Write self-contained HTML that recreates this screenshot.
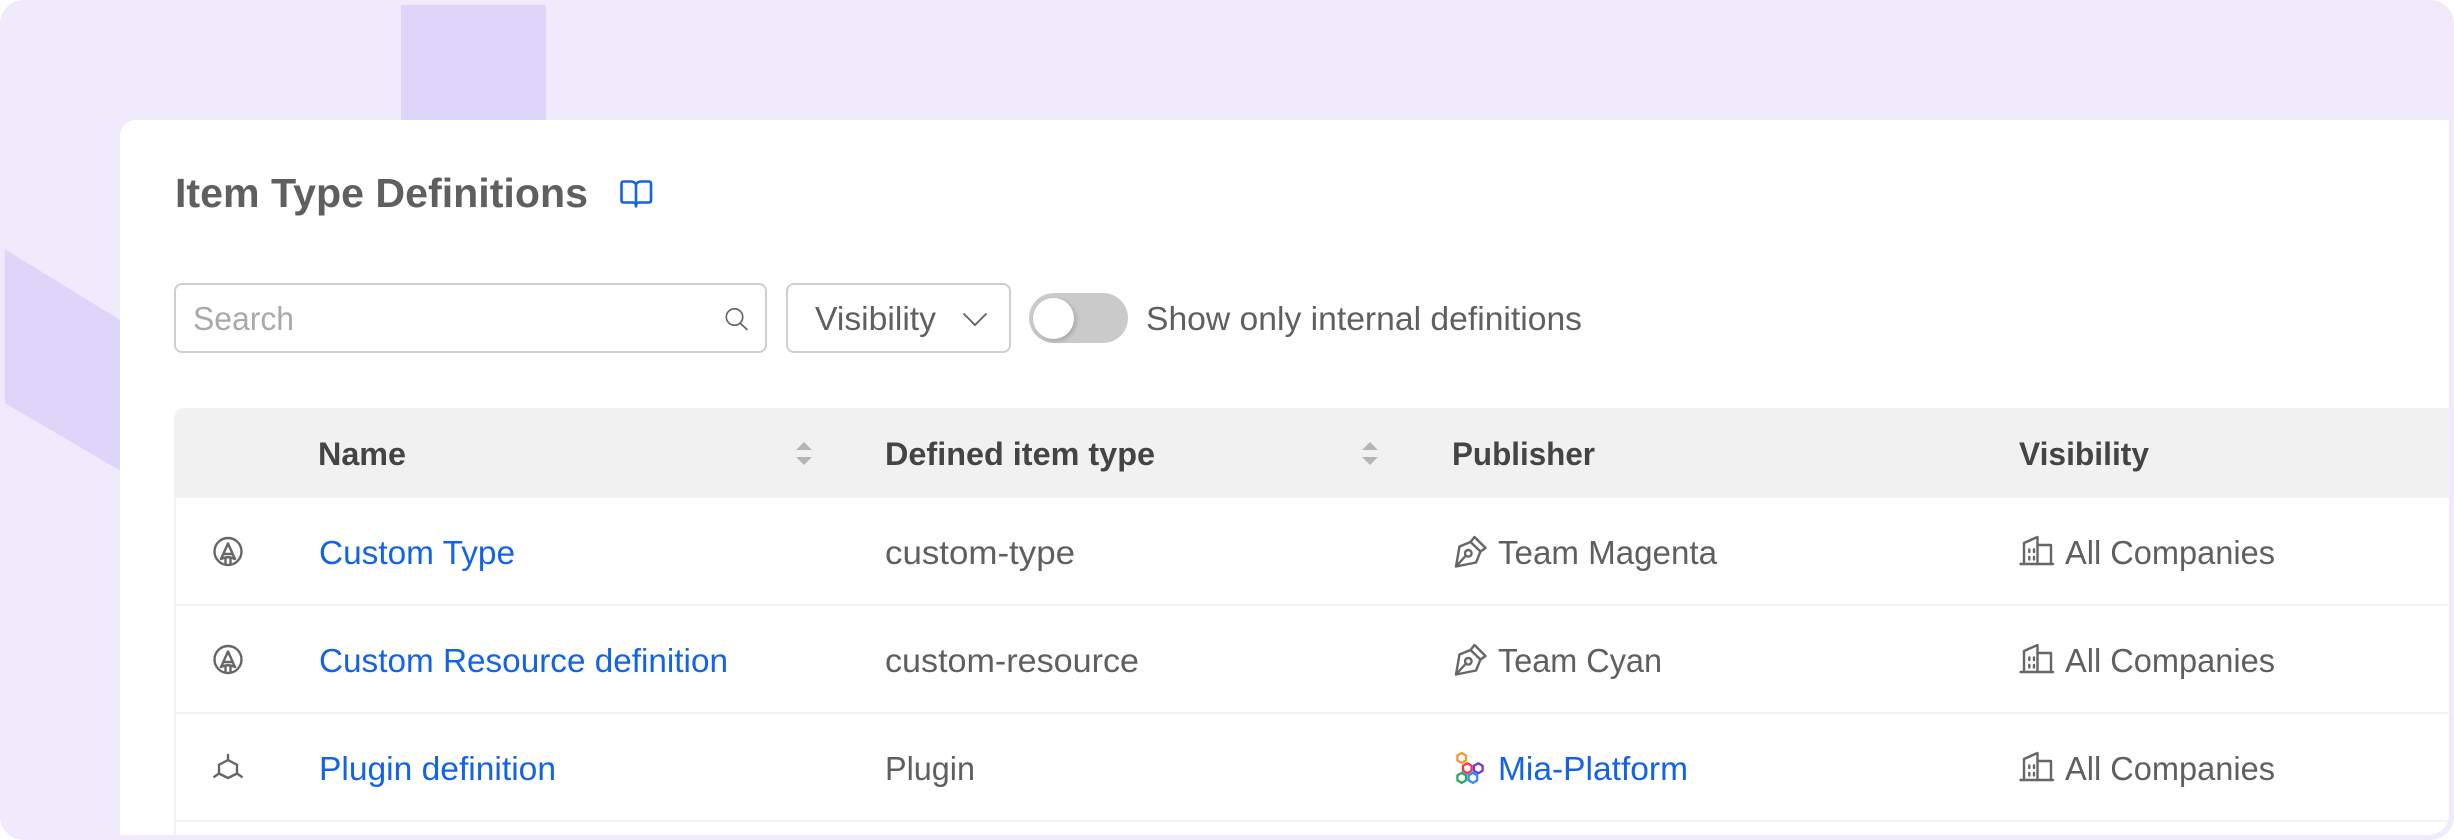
<!DOCTYPE html>
<html><head><meta charset="utf-8"><title>Item Type Definitions</title>
<style>
html,body{margin:0;padding:0;background:#fff;width:2454px;height:840px;overflow:hidden}
.abs{position:absolute;box-sizing:border-box}
svg{position:absolute;left:0;top:0}
text{font-family:"Liberation Sans",sans-serif;font-size:33px;fill:#5f5f5f}
.b{font-weight:700;fill:#444;font-size:32px}
.l{fill:#1463e6}
.i{fill:none;stroke:#666;stroke-width:2.4;stroke-linejoin:round;stroke-linecap:round}
</style></head><body>
<div class="abs" style="left:0;top:0;width:2454px;height:840px;background:#EFEAFC;border-radius:24px;overflow:hidden">
 <div class="abs" style="left:401px;top:5px;width:145px;height:115px;background:#DDD6F8"></div>
 <svg width="2454" height="840"><polygon points="4.6,249 120,320 120,470.500 4.6,403" fill="#DDD6F8"/></svg>
 <div class="abs" style="left:120px;top:120px;width:2329px;height:715px;background:#fff;border-radius:16px 0 20px 0"></div>
 <div class="abs" style="left:174px;top:283px;width:593px;height:70px;border:2px solid #cfcfcf;border-radius:8px"></div>
 <div class="abs" style="left:786px;top:283px;width:225px;height:70px;border:2px solid #cfcfcf;border-radius:8px"></div>
 <div class="abs" style="left:1029px;top:293px;width:99px;height:50px;background:#cacaca;border-radius:25px"></div>
 <div class="abs" style="left:1033px;top:298px;width:41px;height:41px;background:#fff;border-radius:50%;box-shadow:2px 2px 5px rgba(0,0,0,.18)"></div>
 <div class="abs" style="left:174px;top:408px;width:2275px;height:90px;background:#f1f1f1;border-radius:10px 0 0 0"></div>
 <div class="abs" style="left:174px;top:498px;width:2px;height:337px;background:#f3f3f3"></div>
 <div class="abs" style="left:174px;top:604px;width:2275px;height:2px;background:#f3f3f3"></div>
 <div class="abs" style="left:174px;top:712px;width:2275px;height:2px;background:#f3f3f3"></div>
 <div class="abs" style="left:174px;top:820px;width:2275px;height:2px;background:#f3f3f3"></div>
 <svg width="2454" height="840" viewBox="0 0 2454 840">
  <text x="175" y="207" textLength="413" lengthAdjust="spacingAndGlyphs" style="font-size:41px;font-weight:700;fill:#5f5f5f">Item Type Definitions</text>
  <g fill="none" stroke="#1463e6" stroke-width="2.6" stroke-linejoin="round">
   <path d="M636 184.500Q634.500 181.500 631 181.500H623.500Q621.500 181.500 621.500 183.500V200.500Q621.500 202.500 623.500 202.500H633Q635.500 202.500 636 205Q636.500 202.500 639 202.500H649Q651 202.500 651 200.500V183.500Q651 181.500 649 181.500H641Q637.500 181.500 636 184.500Z"/>
   <path d="M636 184.500V207.500"/>
  </g>
  <text x="193" y="330" textLength="101" lengthAdjust="spacingAndGlyphs" style="fill:#aaa">Search</text>
  <g fill="none" stroke="#5f5f5f" stroke-width="1.600" stroke-linecap="round">
   <circle cx="734.500" cy="317" r="8.200"/><path d="M740.500 323.500L747 329.500"/>
  </g>
  <text x="815" y="330" textLength="121" lengthAdjust="spacingAndGlyphs">Visibility</text>
  <path d="M963.500 313.500L975 325L986.500 313.500" fill="none" stroke="#5f5f5f" stroke-width="1.800"/>
  <text x="1146" y="330" textLength="436" lengthAdjust="spacingAndGlyphs">Show only internal definitions</text>

  <text class="b" x="318" y="465" textLength="88" lengthAdjust="spacingAndGlyphs">Name</text>
  <text class="b" x="885" y="465" textLength="270" lengthAdjust="spacingAndGlyphs">Defined item type</text>
  <text class="b" x="1452" y="465" textLength="143" lengthAdjust="spacingAndGlyphs">Publisher</text>
  <text class="b" x="2019" y="465" textLength="130" lengthAdjust="spacingAndGlyphs">Visibility</text>
  <g fill="#b5b5b5">
   <path d="M804 442L812 450H796Z"/><path d="M804 465L812 457H796Z"/>
   <path d="M1370 442L1378 450H1362Z"/><path d="M1370 465L1378 457H1362Z"/>
  </g>

  <text class="l" x="319" y="564" textLength="196" lengthAdjust="spacingAndGlyphs">Custom Type</text>
  <text class="l" x="319" y="672" textLength="409" lengthAdjust="spacingAndGlyphs">Custom Resource definition</text>
  <text class="l" x="319" y="780" textLength="237" lengthAdjust="spacingAndGlyphs">Plugin definition</text>
  <text x="885" y="564" textLength="190" lengthAdjust="spacingAndGlyphs">custom-type</text>
  <text x="885" y="672" textLength="254" lengthAdjust="spacingAndGlyphs">custom-resource</text>
  <text x="885" y="780" textLength="90" lengthAdjust="spacingAndGlyphs">Plugin</text>
  <text x="1498" y="564" textLength="219" lengthAdjust="spacingAndGlyphs">Team Magenta</text>
  <text x="1498" y="672" textLength="164" lengthAdjust="spacingAndGlyphs">Team Cyan</text>
  <text class="l" x="1498" y="780" textLength="190" lengthAdjust="spacingAndGlyphs">Mia-Platform</text>
  <text x="2065" y="564" textLength="210" lengthAdjust="spacingAndGlyphs">All Companies</text>
  <text x="2065" y="672" textLength="210" lengthAdjust="spacingAndGlyphs">All Companies</text>
  <text x="2065" y="780" textLength="210" lengthAdjust="spacingAndGlyphs">All Companies</text>

  <defs>
   <g id="pencil">
    <circle cx="228" cy="551.500" r="13.500"/>
    <path d="M228 543.500L221 559M228 543.500L235 559M223.500 554H232.500M221 559Q228 555.500 235 559M225.500 558V564.500M230.500 558V564.500"/>
   </g>
   <g id="pen">
    <path d="M1456 566.500L1459.500 546.500L1470.500 542L1480.500 551.500L1476 562.500Z"/>
    <path d="M1470.500 542L1474.500 537L1485.500 548L1480.500 551.500"/>
    <path d="M1456 566.500L1465.500 556"/>
    <circle cx="1468.300" cy="553.300" r="3.300"/>
   </g>
   <g id="bld">
    <path d="M2020.500 564H2053"/>
    <path d="M2024 564V543L2037.500 537V564"/>
    <path d="M2037.500 545H2051V564"/>
    <path d="M2029.300 549.500v2.500M2034 549.500v2.500M2029.300 557v2.500M2034 557v2.500"/>
   </g>
  </defs>
  <g class="i"><use href="#pencil"/><use href="#pencil" y="108"/></g>
  <g class="i">
   <path d="M228 760L237 764.800V773.500L228 778L219 773.500V764.800Z"/>
   <path d="M228 760V755M237 773.500L241.700 776.700M219 773.500L214.300 776.700"/>
  </g>
  <g class="i"><use href="#pen"/><use href="#pen" y="108"/></g>
  <g class="i"><use href="#bld"/><use href="#bld" y="108"/><use href="#bld" y="216"/></g>
  <g fill="none" stroke-width="2.300" stroke-linejoin="round">
   <path stroke="#F5973B" d="M1461.700 753L1466 755.500V760.500L1461.700 763L1457.400 760.500V755.500Z"/>
   <path stroke="#EC3A4F" d="M1467.300 763.300L1471.600 765.800V770.800L1467.300 773.300L1463 770.800V765.800Z"/>
   <path stroke="#6B3FD6" d="M1478.300 763.300L1482.600 765.800V770.800L1478.300 773.300L1474 770.800V765.800Z"/>
   <path stroke="#2CA66F" d="M1461.700 772.900L1466 775.400V780.400L1461.700 782.900L1457.400 780.400V775.400Z"/>
   <path stroke="#2B8FF0" d="M1472.900 772.900L1477.200 775.400V780.400L1472.900 782.900L1468.600 780.400V775.400Z"/>
  </g>
 </svg>
</div>
</body></html>
